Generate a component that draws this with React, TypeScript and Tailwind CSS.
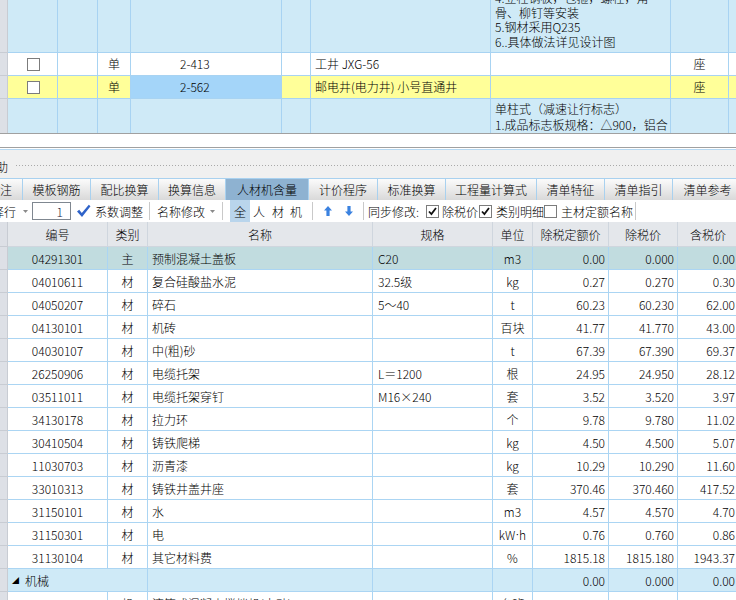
import React from 'react';

type Row = {
  code: string;
  kind: string;
  name: string;
  spec: string;
  unit: React.ReactNode;
  quota: string;
  price: string;
  taxed: string;
};

const materials: Row[] = [
  { code: '04291301', kind: '主', name: '预制混凝土盖板', spec: 'C20', unit: 'm3', quota: '0.00', price: '0.000', taxed: '0.00' },
  { code: '04010611', kind: '材', name: '复合硅酸盐水泥', spec: '32.5级', unit: 'kg', quota: '0.27', price: '0.270', taxed: '0.30' },
  { code: '04050207', kind: '材', name: '碎石', spec: '5～40', unit: 't', quota: '60.23', price: '60.230', taxed: '62.00' },
  { code: '04130101', kind: '材', name: '机砖', spec: '', unit: '百块', quota: '41.77', price: '41.770', taxed: '43.00' },
  { code: '04030107', kind: '材', name: '中(粗)砂', spec: '', unit: 't', quota: '67.39', price: '67.390', taxed: '69.37' },
  { code: '26250906', kind: '材', name: '电缆托架', spec: 'L＝1200', unit: '根', quota: '24.95', price: '24.950', taxed: '28.12' },
  { code: '03511011', kind: '材', name: '电缆托架穿钉', spec: 'M16×240', unit: '套', quota: '3.52', price: '3.520', taxed: '3.97' },
  { code: '34130178', kind: '材', name: '拉力环', spec: '', unit: '个', quota: '9.78', price: '9.780', taxed: '11.02' },
  { code: '30410504', kind: '材', name: '铸铁爬梯', spec: '', unit: 'kg', quota: '4.50', price: '4.500', taxed: '5.07' },
  { code: '11030703', kind: '材', name: '沥青漆', spec: '', unit: 'kg', quota: '10.29', price: '10.290', taxed: '11.60' },
  { code: '33010313', kind: '材', name: '铸铁井盖井座', spec: '', unit: '套', quota: '370.46', price: '370.460', taxed: '417.52' },
  { code: '31150101', kind: '材', name: '水', spec: '', unit: 'm3', quota: '4.57', price: '4.570', taxed: '4.70' },
  {
    code: '31150301', kind: '材', name: '电', spec: '',
    unit: <>kW<span className="font-['Liberation_Sans'] text-[11px]">·</span>h</>,
    quota: '0.76', price: '0.760', taxed: '0.86',
  },
  { code: '31130104', kind: '材', name: '其它材料费', spec: '', unit: '%', quota: '1815.18', price: '1815.180', taxed: '1943.37' },
];

const tabs = ['模板钢筋', '配比换算', '换算信息', '人材机含量', '计价程序', '标准换算', '工程量计算式', '清单特征', '清单指引', '清单参考'];
const tabWidths = ['w-[68px]', 'w-[68px]', 'w-[67px]', 'w-[83px]', 'w-[69px]', 'w-[68px]', 'w-[91px]', 'w-[68px]', 'w-[68px]', 'w-[70px]'];

function Box({ checked }: { checked?: boolean }) {
  return (
    <span className="w-[13px] h-[13px] border border-[#7c7c7c] bg-white flex items-center justify-center shrink-0">
      {checked && (
        <svg width="9" height="9" viewBox="0 0 9 9">
          <path d="M1 4.5 L3.4 7 L8 1" fill="none" stroke="#111" strokeWidth="1.8" />
        </svg>
      )}
    </span>
  );
}

function Sep() {
  return <span className="block w-px h-[18px] bg-[#c9c9c9]" />;
}

function Caret() {
  return (
    <svg width="5" height="3" viewBox="0 0 5 3" className="block">
      <path d="M0 0 H5 L2.5 3 Z" fill="#8a8a8a" />
    </svg>
  );
}

export default function App() {
  const cell = 'border-r border-b border-[#abd5f3] h-[23px] pt-px flex items-center overflow-hidden whitespace-nowrap';
  const topLine = 'border-r border-b border-[#a8d3f2] overflow-hidden';
  const gutter = 'bg-[#dde0e6] border-r border-b border-[#c8ccd3]';

  return (
    <div className="w-[736px] h-[600px] overflow-hidden bg-white text-[12px] text-black font-light font-['Noto_Sans_CJK_SC',sans-serif] leading-none">
      {/* upper list */}
      <div className="grid grid-cols-[8px_50px_40px_33px_151px_29px_180px_180px_58px_7px] grid-rows-[53px_23px_23px_34px]">
        {/* row 1, partly scrolled away */}
        <div className={gutter} />
        <div className={`${topLine} bg-[#cfeaf7]`} />
        <div className={`${topLine} bg-[#cfeaf7]`} />
        <div className={`${topLine} bg-[#cfeaf7]`} />
        <div className={`${topLine} bg-[#cfeaf7]`} />
        <div className={`${topLine} bg-[#cfeaf7]`} />
        <div className={`${topLine} bg-[#cfeaf7]`} />
        <div className={`${topLine} bg-[#cfeaf7] flex flex-col justify-end pl-[4px] pb-[3px] leading-[14.5px] whitespace-nowrap`}>
          <div className="shrink-0">4.立柱钢板，包箍，螺栓，角</div>
          <div className="shrink-0">骨、柳钉等安装</div>
          <div className="shrink-0">5.钢材采用Q235</div>
          <div className="shrink-0">6..具体做法详见设计图</div>
        </div>
        <div className={`${topLine} bg-[#cfeaf7]`} />
        <div className="border-b border-[#a8d3f2] bg-[#cfeaf7]" />

        {/* row 2 */}
        <div className={gutter} />
        <div className={`${topLine} bg-white flex items-center pl-[19px]`}><Box /></div>
        <div className={`${topLine} bg-white`} />
        <div className={`${topLine} bg-white flex items-center justify-center`}>单</div>
        <div className={`${topLine} bg-white flex items-center pl-[49px]`}>2-413</div>
        <div className={`${topLine} bg-white`} />
        <div className={`${topLine} bg-white flex items-center pl-[4px] whitespace-nowrap`}>工井 JXG-56</div>
        <div className={`${topLine} bg-white`} />
        <div className={`${topLine} bg-white flex items-center justify-center`}>座</div>
        <div className="border-b border-[#a8d3f2] bg-white" />

        {/* row 3, current */}
        <div className={gutter} />
        <div className={`${topLine} bg-[#ffff99] flex items-center pl-[19px]`}><Box /></div>
        <div className={`${topLine} bg-[#ffff99]`} />
        <div className={`${topLine} bg-[#ffff99] flex items-center justify-center`}>单</div>
        <div className={`${topLine} bg-[#a4d5f9] flex items-center pl-[49px]`}>2-562</div>
        <div className={`${topLine} bg-[#ffff99]`} />
        <div className={`${topLine} bg-[#ffff99] flex items-center pl-[4px] whitespace-nowrap`}>邮电井(电力井) 小号直通井</div>
        <div className={`${topLine} bg-[#ffff99]`} />
        <div className={`${topLine} bg-[#ffff99] flex items-center justify-center`}>座</div>
        <div className="border-b border-[#a8d3f2] bg-[#ffff99]" />

        {/* row 4, cut by splitter */}
        <div className="bg-[#dde0e6] border-r border-[#c8ccd3]" />
        <div className="border-r border-[#a8d3f2] bg-[#cfeaf7]" />
        <div className="border-r border-[#a8d3f2] bg-[#cfeaf7]" />
        <div className="border-r border-[#a8d3f2] bg-[#cfeaf7]" />
        <div className="border-r border-[#a8d3f2] bg-[#cfeaf7]" />
        <div className="border-r border-[#a8d3f2] bg-[#cfeaf7]" />
        <div className="border-r border-[#a8d3f2] bg-[#cfeaf7]" />
        <div className="border-r border-[#a8d3f2] bg-[#cfeaf7] pl-[4px] pt-[2px] leading-[16px] overflow-hidden whitespace-nowrap">
          <div>单柱式（减速让行标志）</div>
          <div>1.成品标志板规格：△900，铝合</div>
        </div>
        <div className="border-r border-[#a8d3f2] bg-[#cfeaf7]" />
        <div className="bg-[#cfeaf7]" />
      </div>

      {/* splitter */}
      <div className="h-px bg-[#a0a0a0]" />
      <div className="h-[13px] bg-white" />
      <div className="h-px bg-[#a0a0a0]" />
      <div className="h-px bg-white" />
      <div className="h-px bg-[#b5d8f2]" />

      {/* panel caption */}
      <div className="h-[28px] pt-[5px] bg-[#f0f0f0] flex items-center overflow-hidden">
        <span className="ml-[-16px] w-[24px] shrink-0">辅助</span>
        <div className="ml-[7px] mb-[2px] flex-1 h-[4px] bg-[radial-gradient(#a9a9a9_0.7px,transparent_0.9px)] bg-[length:3px_3px]" />
      </div>

      {/* tabs */}
      <div className="h-[22px] flex border-t border-[#a9d1ef] overflow-hidden">
        <div className="w-[23px] shrink-0 pt-px overflow-hidden border-r border-[#a9d1ef] bg-[linear-gradient(#fbfbfb,#d9d9d9)] flex items-center">
          <span className="ml-[-12px] whitespace-nowrap">备注</span>
        </div>
        {tabs.map((t, i) => (
          <div
            key={t}
            className={`${tabWidths[i]} shrink-0 pt-px border-r border-[#a9d1ef] flex items-center justify-center whitespace-nowrap ${
              i === 3 ? 'bg-[#8eb2d1]' : 'bg-[linear-gradient(#fbfbfb,#d9d9d9)]'
            }`}
          >
            {t}
          </div>
        ))}
      </div>

      {/* toolbar */}
      <div className="h-[22px] flex items-center whitespace-nowrap overflow-hidden bg-white">
        <span className="ml-[-20px] w-[36px] shrink-0 pt-px">选择行</span>
        <span className="ml-[7px]"><Caret /></span>
        <div className="ml-[4px] w-[39px] h-[18px] shrink-0 border border-[#7f8790] flex items-center justify-end pr-[7px] pt-px text-[#1a1a40]">1</div>
        <svg className="ml-[5px] shrink-0" width="15" height="14" viewBox="0 0 15 14">
          <path d="M1 7.5 L3.2 5.8 L5.8 9 L12.8 0.8 L14.5 2.2 L6 13 Z" fill="#2f63c9" />
        </svg>
        <span className="ml-[4px] w-[48px] shrink-0 pt-px">系数调整</span>
        <span className="ml-[6px]"><Sep /></span>
        <span className="ml-[7px] w-[48px] shrink-0 pt-px">名称修改</span>
        <span className="ml-[5px]"><Caret /></span>
        <span className="ml-[7px]"><Sep /></span>
        <span className="ml-[7px] w-[20px] h-[22px] pt-px shrink-0 bg-[#b9d5ec] flex items-center justify-center">全</span>
        <span className="ml-[3px] w-[12px] shrink-0 pt-px">人</span>
        <span className="ml-[7px] w-[12px] shrink-0 pt-px">材</span>
        <span className="ml-[6px] w-[12px] shrink-0 pt-px">机</span>
        <span className="ml-[10px]"><Sep /></span>
        <svg className="ml-[11px] shrink-0" width="8" height="10" viewBox="0 0 8 10">
          <path d="M4 0 L8 4.5 L5.6 4.5 L5.6 10 L2.4 10 L2.4 4.5 L0 4.5 Z" fill="#3b82e0" />
        </svg>
        <svg className="ml-[13px] shrink-0" width="8" height="10" viewBox="0 0 8 10">
          <path d="M4 10 L8 5.5 L5.6 5.5 L5.6 0 L2.4 0 L2.4 5.5 L0 5.5 Z" fill="#3b82e0" />
        </svg>
        <span className="ml-[10px]"><Sep /></span>
        <span className="ml-[4px] w-[51px] shrink-0 pt-px">同步修改:</span>
        <span className="ml-[7px]"><Box checked /></span>
        <span className="ml-[3px] w-[36px] shrink-0 pt-px">除税价</span>
        <span className="ml-[1px]"><Box checked /></span>
        <span className="ml-[4px] w-[48px] shrink-0 pt-px">类别明细</span>
        <span><Box /></span>
        <span className="ml-[4px] w-[72px] shrink-0 pt-px">主材定额名称</span>
        <span className="ml-[2px]"><Sep /></span>
      </div>

      {/* lower list */}
      <div className="grid grid-cols-[8px_100px_40px_225px_120px_40px_76px_69px_61px]">
        <div className={`h-[25px] ${gutter}`} />
        {['编号', '类别', '名称', '规格', '单位', '除税定额价', '除税价', '含税价'].map((h) => (
          <div key={h} className="h-[25px] pt-px bg-[#e4e7eb] border-r border-b border-[#cfd6de] flex items-center justify-center whitespace-nowrap">
            {h}
          </div>
        ))}

        {materials.map((r, i) => {
          const bg = i === 0 ? 'bg-[#c1dcdf]' : 'bg-white';
          return (
            <React.Fragment key={r.code}>
              <div className={`h-[23px] ${gutter}`} />
              <div className={`${cell} ${bg} justify-center`}>{r.code}</div>
              <div className={`${cell} ${bg} justify-center`}>{r.kind}</div>
              <div className={`${cell} ${bg} pl-[4px]`}>{r.name}</div>
              <div className={`${cell} ${bg} pl-[5px]`}>{r.spec}</div>
              <div className={`${cell} ${bg} justify-center`}>{r.unit}</div>
              <div className={`${cell} ${bg} justify-end pr-[3px]`}>{r.quota}</div>
              <div className={`${cell} ${bg} justify-end pr-[3px]`}>{r.price}</div>
              <div className={`${cell} ${bg} justify-end pr-[3px]`}>{r.taxed}</div>
            </React.Fragment>
          );
        })}

        {/* machinery group */}
        <div className={`h-[23px] ${gutter}`} />
        <div className="col-span-2 h-[23px] pt-px bg-[#cfeaf7] border-r border-b border-[#abd5f3] flex items-center pl-[4px] whitespace-nowrap">
          <span className="text-[7px] mr-[6px]">◢</span>机械
        </div>
        <div className={`${cell} bg-[#cfeaf7]`} />
        <div className={`${cell} bg-[#cfeaf7]`} />
        <div className={`${cell} bg-[#cfeaf7]`} />
        <div className={`${cell} bg-[#cfeaf7] justify-end pr-[3px]`}>0.00</div>
        <div className={`${cell} bg-[#cfeaf7] justify-end pr-[3px]`}>0.000</div>
        <div className={`${cell} bg-[#cfeaf7] justify-end pr-[3px]`}>0.00</div>

        {/* next row, only its top shows */}
        <div className={`h-[23px] ${gutter}`} />
        <div className={`${cell} bg-white pl-[12px]`}>
          <span className="text-[7px] mr-[10px]">▷</span>99050503
        </div>
        <div className={`${cell} bg-white justify-center`}>机</div>
        <div className={`${cell} bg-white pl-[4px]`}>滚筒式混凝土搅拌机(电动) 400L</div>
        <div className={`${cell} bg-white`} />
        <div className={`${cell} bg-white justify-center`}>台班</div>
        <div className={`${cell} bg-white justify-end pr-[3px]`}>158.88</div>
        <div className={`${cell} bg-white justify-end pr-[3px]`}>158.880</div>
        <div className={`${cell} bg-white justify-end pr-[3px]`}>158.88</div>
      </div>
    </div>
  );
}
